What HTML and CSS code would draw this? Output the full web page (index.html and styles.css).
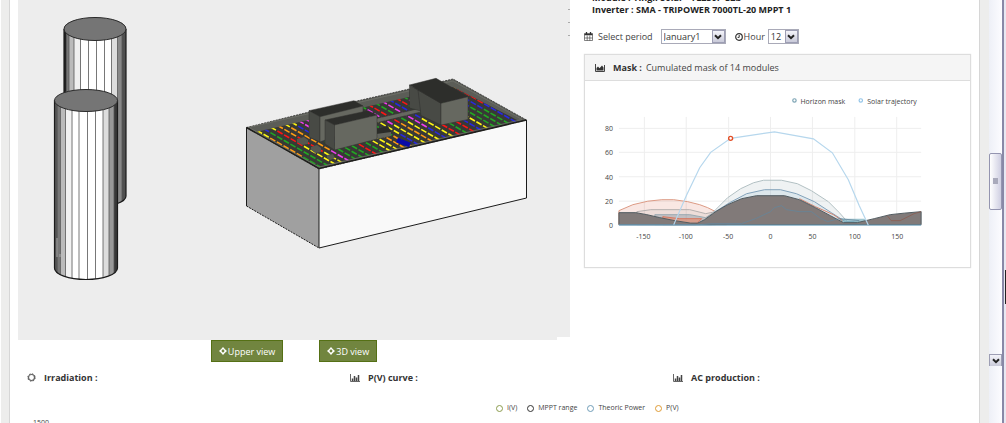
FILE: index.html
```html
<!DOCTYPE html>
<html lang="en">
<head>
<meta charset="utf-8">
<title>Shading simulation</title>
<link rel="stylesheet" href="styles.css">
</head>
<body>
<main class="page">
  <div class="overview">
    <section class="viewer" aria-label="3D scene">
      <svg class="scene" viewBox="18 0 552 340">
        <defs>
          <clipPath id="back-body"><path d="M64 29V196A31 11 0 0 0 126 196V29A31 11.5 0 0 0 64 29Z"/></clipPath>
          <clipPath id="front-body"><path d="M54 100V268A31.750 11.500 0 0 0 117.500 268V100Z"/></clipPath>
          <clipPath id="roof-area"><path d="M256 132L409 97L453 87L519 121L319 167Z"/></clipPath>
        </defs>
        <path fill="#ededed" d="M18 0H570V337H557V340H18Z"/>
        <path fill="#aaa" d="M568 9h2v1h-2zM568 22h2v1h-2zM568 35h2v1h-2z"/>
        <g clip-path="url(#back-body)">
          <path fill="#fff" d="M64 0H126V220H64Z"/>
          <path fill="#222" d="M64 0h2v220h-2z"/><path fill="#777" d="M66 0h3v220h-3z"/><path fill="#bbb" d="M69 0h5v220h-5z"/><path fill="#f0f0f0" d="M74 0h7v220h-7z"/><path fill="#ddd" d="M111.500 0h6v220h-6z"/><path fill="#888" d="M117.500 0h4.500v220h-4.500z"/><path fill="#505050" d="M122 0h4v220h-4z"/>
          <path class="facet" d="M66.500 0V220M69 0V220M74 0V220M80.500 0V220M88.500 0V220M96.500 0V220M104.500 0V220M111.500 0V220M117.500 0V220M122 0V220"/>
        </g>
        <path class="outline" d="M64 29V196A31 11 0 0 0 126 196V29"/>
        <ellipse class="cap" cx="95" cy="29" rx="31" ry="11.500"/>
        <g clip-path="url(#front-body)">
          <path fill="#fff" d="M54 90H118V290H54Z"/>
          <path fill="#555" d="M54 90h3.500v200h-3.500z"/><path fill="#777" d="M57.500 90h3v200h-3z"/><path fill="#bbb" d="M60.500 90h5v200h-5z"/><path fill="#f2f2f2" d="M65.500 90h7v200h-7z"/><path fill="#ddd" d="M103 90h6v200h-6z"/><path fill="#999" d="M109 90h5v200h-5z"/><path fill="#383838" d="M114 90h4v200h-4z"/>
          <path class="facet" d="M57.500 90V290M60.500 90V290M65.500 90V290M72 90V290M79 90V290M87.500 90V290M95.500 90V290M103 90V290M109 90V290M114 90V290"/>
          <path stroke="#aaa" d="M57 238V257M60 254V257"/>
        </g>
        <path class="outline" d="M54.500 100V268A31.500 11.500 0 0 0 117.500 268V100"/>
        <ellipse class="cap" cx="86" cy="100.500" rx="31.500" ry="11"/>

        <path fill="#a0a0a0" d="M246.500 127.500L319 169V248L246.500 206Z"/>
        <path fill="#f9f9f9" d="M319 169L526.500 120V198L319 248Z"/>
        <path fill="#5b5d57" stroke="#30302e" stroke-width=".8" stroke-dasharray="2 1" d="M246.500 127.500L311 111.500L453 79L526.500 120L319 169Z"/>
        <path fill="#383936" d="M256 132L409 97L453 87L519 121L319 167Z"/>
        <g id="modules" clip-path="url(#roof-area)"></g>
        <path fill="none" stroke="#1f1f1d" stroke-width="1.500" d="M246.500 127.500L319 168.500L526.500 120"/>
        <path fill="none" stroke="#74766f" stroke-width=".7" d="M250 128L319 167L522 119.500L453 81L248 127.500"/>
        <path class="edge" d="M246.500 127.500V206M319 169V248M526.500 120V198M319 248L526.500 198"/>
        <path class="edge" stroke-dasharray="2 1" d="M246.500 206L319 248"/>

        <path fill="#666860" stroke="#30312e" stroke-width=".6" d="M376 118.500L421 108V112L376 123Z"/>
        <path fill="#60625b" d="M376 131L391 132V136L376 139Z"/>
        <path fill="#2b2c29" d="M376 129L388 126L391 132L376 134Z"/>
        <path stroke="#0a0aa8" stroke-width="5" d="M397 140L410 145"/>
        <g class="block">
          <path class="top" d="M309 110.700L354 100.700L363 106L320 116.700Z"/>
          <path class="shade" d="M309 110.700L320 116.700V142L309 137Z"/>
          <path class="face" d="M320 116.700L363 106V126L320 142Z"/>
          <path class="top" d="M325 120L368 110.700L377 115L334.500 125Z"/>
          <path class="shade" d="M325 120L334.500 125V150L325 144Z"/>
          <path class="face" d="M334.500 125L377 115V139L334.500 150Z"/>
          <path class="shade" d="M409.500 85L421 92V111L409.500 108Z"/>
          <path class="shade" d="M418 90L441 103.300V125L421 115.500Z"/>
          <path class="top" d="M409.500 85L436 78.300L468 96.700L441 103.300Z"/>
          <path class="face" d="M441 103.300L468 96.700V119.500L441 125Z"/>
        </g>
        <path fill="#55574f" d="M297 139l7-2 4 3v4l-6 1-5-3zM311 147l6-2 4 3v4l-6 1-4-3zM327 155l6-1 2 4-5 2-3-2z"/>
      </svg>
      <div class="view-actions">
        <button class="view-btn" type="button"><svg class="aim" viewBox="0 0 8 8"><path d="M4 0L6 2.200L8 4L6 5.800L4 8L2 5.800L0 4L2 2.200Z" fill="#fff"/><circle cx="4" cy="4" r="1.400" fill="#71853f"/></svg>Upper view</button>
        <button class="view-btn" type="button"><svg class="aim" viewBox="0 0 8 8"><path d="M4 0L6 2.200L8 4L6 5.800L4 8L2 5.800L0 4L2 2.200Z" fill="#fff"/><circle cx="4" cy="4" r="1.400" fill="#71853f"/></svg>3D view</button>
      </div>
    </section>

    <section class="details">
      <div class="specs">
        <p>Module : Yingli Solar - YL250P-32b</p>
        <p>Inverter : SMA - TRIPOWER 7000TL-20 MPPT 1</p>
      </div>
      <div class="filters">
        <svg class="cal" viewBox="0 0 9 9" fill="none" stroke="#333"><path d="M.5 1.500H8.500V8.500H.5ZM.5 6H8.500M3.200 3.500V8.500M5.800 3.500V8.500" stroke-width=".6"/><path d="M.5 2.500H8.500M2.500 0V2.500M6.500 0V2.500" stroke-width="1.300"/></svg>
        <label for="period">Select period</label>
        <span class="picker period">
          <select id="period"><option>January1</option></select>
          <span class="drop"><svg viewBox="0 0 8 6"><path d="M1 1.200L4 4.200L7 1.200" fill="none" stroke="#222" stroke-width="2"/></svg></span>
        </span>
        <svg class="clock" viewBox="0 0 8 8" fill="none" stroke="#333"><circle cx="4" cy="4" r="3.300" stroke-width="1.200"/><path d="M4.200 2V4.400H2.600"/></svg>
        <label for="hour">Hour</label>
        <span class="picker hour">
          <select id="hour"><option>12</option></select>
          <span class="drop"><svg viewBox="0 0 8 6"><path d="M1 1.200L4 4.200L7 1.200" fill="none" stroke="#222" stroke-width="2"/></svg></span>
        </span>
      </div>

      <article class="card">
        <header class="card-head">
          <svg class="pic" viewBox="0 0 10 8"><path d="M.5 0V7.500H9.500V1" fill="none" stroke="#444"/><path d="M1.500 6.500V4L3 2.500L4.500 4.200L7 1.500L8.500 3.500V6.500Z" fill="#333"/></svg>
          <h2>Mask :</h2><span>Cumulated mask of 14 modules</span>
        </header>
        <svg class="chart" viewBox="585 81 386 186">
          <path stroke="#eee" d="M619 128.500H922M619 152.500H922M619 177H922M619 201.500H922M644.500 117V225M686.500 117V225M729 117V225M771 117V225M813 117V225M855.500 117V225M897.500 117V225"/>
          <path fill="#d9694f" fill-opacity=".16" stroke="#dc9a84" d="M619 211L633 205L648 201.500L662 200H674L688 202L700 205L708 208L716 212L727 225H619Z"/>
          <path fill="#888" fill-opacity=".1" stroke="#b5b0af" d="M637 212L651 210H690L706 214L716 212V225H637Z"/>
          <path fill="#5d7c90" fill-opacity=".3" stroke="#8ca0aa" stroke-width=".8" d="M655 215H690L706 218L712 214V225H655Z"/>
          <path fill="#e58a6b" fill-opacity=".6" stroke="#d9694f" stroke-width=".8" d="M663 217L680 219H702L696 225H663Z"/>
          <path fill="#7b97a0" fill-opacity=".12" stroke="#b2c0c3" d="M706 221L716 210L728 198L741 189L754 183L764 180.500H782L798 184L812 191L829 202L840 213L848 222L860 222"/>
          <path fill="#76a8c8" fill-opacity=".15" stroke="#83a2ba" d="M714 213L730 203L747 194L765 190H781L797 194L815 202L832 213L846 222H855"/>
          <path fill="#78aebc" d="M840 219H865L872 225H840Z" opacity=".7"/>
          <path fill="none" stroke="#d36b4e" stroke-width=".8" d="M800 199L816 207L834 215L843 221"/>
          <path fill="#817a79" stroke="#515b60" d="M619 213H636L647 215L660 218L675 221L691 223.500H698L705 220L716 212L728 205L742 199L757 196H785L800 200L816 208L831 216L844 223H858L875 219L891 215L905 213.500L922 212V225H619Z"/>
          <path fill="none" stroke="#64859a" stroke-width=".8" d="M619 225H700L711 224H742L756 219L771 212L775 208L782 206L787 210L800 212H812L820 218L828 222L840 219L860 221"/>
          <path fill="none" stroke="#8c5d50" stroke-width=".8" d="M888 216L892 221H901L915 214L922 212"/>
          <path fill="none" stroke="#72a7c3" d="M619 225.500H922"/>
          <path fill="none" stroke="#b6d7ed" stroke-width="1.200" d="M674 225L687 195L700 168L711 152.500L731 138.500L775 132L814 139L833 153L849 180L860 206L869 225.500"/>
          <circle cx="731" cy="138.500" r="2" fill="#fff" stroke="#e34f27" stroke-width="1.400"/>
          <g fill="#fff" stroke-width="1.200"><circle cx="795" cy="100.500" r="1.700" stroke="#7ba3b3"/><circle cx="861.500" cy="100.500" r="1.700" stroke="#92c4e8"/></g>
          <g class="axis"><text x="801" y="104">Horizon mask</text><text x="868" y="104">Solar trajectory</text></g>
          <g class="axis" text-anchor="end"><text x="613" y="131">80</text><text x="613" y="155">60</text><text x="613" y="180">40</text><text x="613" y="204">20</text><text x="613" y="228">0</text></g>
          <g class="axis" text-anchor="middle"><text x="643.500" y="239">-150</text><text x="686" y="239">-100</text><text x="728.500" y="239">-50</text><text x="771" y="239">0</text><text x="813" y="239">50</text><text x="855.500" y="239">100</text><text x="898" y="239">150</text></g>
        </svg>
      </article>
    </section>
  </div>

  <div class="results">
    <h2><svg class="sun" viewBox="0 0 9 9"><circle cx="4.500" cy="4.500" r="3" fill="none" stroke="#666" stroke-width="1.200"/><circle cx="4.500" cy="4.500" r="3.700" fill="none" stroke="#555" stroke-dasharray="1.500 1.400"/></svg>Irradiation :</h2>
    <h2><svg class="bars" viewBox="0 0 10 8"><path d="M.5 0V7.500H10" fill="none" stroke="#666"/><path d="M2.500 7V4.500M4.500 7V2M6.500 7V3.500M8.500 7V1" stroke="#444" stroke-width="1.500"/></svg>P(V) curve :</h2>
    <h2><svg class="bars" viewBox="0 0 10 8"><path d="M.5 0V7.500H10" fill="none" stroke="#666"/><path d="M2.500 7V4.500M4.500 7V2M6.500 7V3.500M8.500 7V1" stroke="#444" stroke-width="1.500"/></svg>AC production :</h2>
  </div>
  <ul class="legend">
    <li class="iv">I(V)</li><li class="mppt">MPPT range</li><li class="theoric">Theoric Power</li><li class="pv">P(V)</li>
  </ul>
  <div class="plots"><span>1500</span></div>
</main>
<aside class="scrollbar" aria-hidden="true">
  <span class="track-top"></span>
  <span class="thumb"></span>
  <span class="track-mid"></span>
  <span class="down"><svg viewBox="0 0 8 6"><path d="M1 1.200L4 4.200L7 1.200" fill="none" stroke="#222" stroke-width="2"/></svg></span>
  <span class="track-end"></span>
</aside>
<div class="frame" aria-hidden="true"><span class="frame-mark"></span></div>
<script src="script.js"></script>
</body>
</html>
```
FILE: styles.css
```css
* { box-sizing: border-box; }
body {
  margin: 0;
  height: 100vh;
  overflow: hidden;
  display: flex;
  background: #ededec;
  border-left: 1px solid #fff;
  font: 9px/13px "Open Sans", "Noto Sans", sans-serif;
  color: #444;
}
h2, p, ul { margin: 0; padding: 0; }
h2 { font-size: 9px; font-weight: 700; color: #333; }
svg { display: block; flex: none; }
.page {
  flex: 1;
  min-width: 0;
  margin: 0 9px 0 8px;
  background: #fff;
  border: solid #d6d6d6;
  border-width: 0 1px;
}
.overview {
  display: grid;
  grid-template-columns: 552fr 387fr;
  gap: 14px;
  padding: 0 8px;
}
.scene { width: 100%; height: auto; }
.facet { stroke: #555; stroke-width: 0.8; }
.outline { fill: none; stroke: #1b1b1b; stroke-width: 1.2; }
.cap { fill: #757575; stroke: #2a2a2a; }
.edge { fill: none; stroke: #1b1b1b; }
.block path { stroke: #30312e; stroke-width: 0.5; }
.block .top { fill: #2d2e2b; }
.block .shade { fill: #484a45; }
.block .face { fill: #666860; }
.view-actions { display: flex; justify-content: center; gap: 36px; }
.view-btn {
  display: flex;
  align-items: center;
  gap: 1px;
  height: 22px;
  padding: 0 7px;
  border: 1px solid #557015;
  background: #71853f;
  color: #fff;
  font: inherit;
}
.aim { width: 8px; height: 8px; }

.details { min-width: 0; }
.specs { margin-top: -8px; padding-left: 8px; font-weight: 700; line-height: 12px; color: #222; white-space: nowrap; }
.filters { display: flex; align-items: center; margin-top: 13px; height: 15px; white-space: nowrap; }
.cal { width: 9px; height: 9px; margin-right: 5px; }
.clock { width: 8px; height: 8px; margin: 0 1px 0 9px; }
.picker { display: grid; margin-left: 3px; }
.period { width: 65px; margin-left: 8px; }
.hour { width: 31px; }
.picker select {
  grid-area: 1 / 1;
  appearance: none;
  height: 15px;
  padding: 0 2px;
  border: 1px solid #a9aab8;
  border-radius: 0;
  background: #fff;
  font: inherit;
  line-height: 13px;
  color: #333;
}
.drop, .down {
  display: grid;
  place-items: center;
  border: 1px solid #9d9eb4;
  background: linear-gradient(#f4f4fa, #c9cad9);
}
.drop { grid-area: 1 / 1; justify-self: end; width: 13px; margin: 1px; pointer-events: none; }
.drop svg, .down svg { width: 8px; height: 6px; }

.card { margin-top: 10px; border: 1px solid #ddd; box-shadow: 0 0 1px #ddd; }
.card-head {
  display: flex;
  align-items: center;
  height: 26px;
  padding-left: 10px;
  gap: 4px;
  background: #f5f5f5;
  border-bottom: 1px solid #ddd;
}
.pic { width: 10px; height: 8px; margin-right: 4px; }
.chart { width: 100%; height: auto; }
.axis { font-size: 7px; fill: #444; }

.results { display: grid; grid-template-columns: repeat(3, 1fr); margin-top: 9px; }
.results h2 { display: flex; align-items: center; gap: 8px; padding-left: 17px; }
.sun { width: 9px; height: 9px; }
.bars { width: 10px; height: 8px; }
.legend {
  display: flex;
  justify-content: flex-end;
  gap: 10px;
  margin-top: 18px;
  padding-right: 31%;
  list-style: none;
  font-size: 7px;
  line-height: 12px;
}
.legend li { display: flex; align-items: center; gap: 4px; }
.legend li::before { content: ""; width: 5px; height: 5px; border: 1px solid var(--dot); border-radius: 50%; }
.iv { --dot: #8b9c4d; }
.mppt { --dot: #333; }
.theoric { --dot: #6f9db8; }
.pv { --dot: #df9c35; }
.plots { padding-left: 23px; margin-top: 2px; font-size: 7px; }

.scrollbar { display: flex; flex-direction: column; width: 13px; background: linear-gradient(90deg, #eef0f7, #fcfcff); }
.track-top { flex: 154; }
.thumb { flex: 55; border: 1px solid #9495b0; border-radius: 2px; background: linear-gradient(#a9aabb, #a9aabb) center / 5px 6px no-repeat, linear-gradient(90deg, #fff, #cfcfe2); }
.track-mid { flex: 146; }
.down { flex: 11; border-bottom: 0; }
.track-end { flex: 57; }
.frame { display: flex; align-items: flex-end; justify-content: flex-end; padding-bottom: 119px; width: 4px; border-left: 2px solid #8988a7; background: #e8e8f2; }
.frame-mark { width: 1px; height: 34px; background: #222; }
```
FILE: script.js
```js
// Draws the rows of photovoltaic modules on the roof, string by string.
const layer = document.getElementById("modules");
const palette = ["#ff1414", "#22a722", "#fff714", "#ff1414", "#f03cf0", "#22a722", "#2828e0", "#fff714", "#ff9c14"];
const front = { x: 319, y: 169 };
const along = { x: 208, y: -49 };
const depth = { x: -73, y: -42 };
const rows = 30;
const cells = 11;
let seed = 7;
function next(n) {
  seed = (seed * 1103 + 12345) % 65521;
  return seed % n;
}
for (let r = 0; r < rows; r++) {
  const u = (r + 0.5) / rows;
  let color = palette[next(palette.length)];
  let run = 3 + next(3);
  for (let c = 0; c < cells; c++) {
    if (run-- === 0) {
      color = palette[next(palette.length)];
      run = 3 + next(3);
    }
    const a = (c + 0.1) / cells;
    const b = (c + 0.88) / cells;
    const line = document.createElementNS("http://www.w3.org/2000/svg", "line");
    line.setAttribute("x1", front.x + along.x * u + depth.x * a);
    line.setAttribute("y1", front.y + along.y * u + depth.y * a);
    line.setAttribute("x2", front.x + along.x * u + depth.x * b);
    line.setAttribute("y2", front.y + along.y * u + depth.y * b);
    line.setAttribute("stroke", color);
    line.setAttribute("stroke-width", "1.6");
    layer.appendChild(line);
  }
}
```
